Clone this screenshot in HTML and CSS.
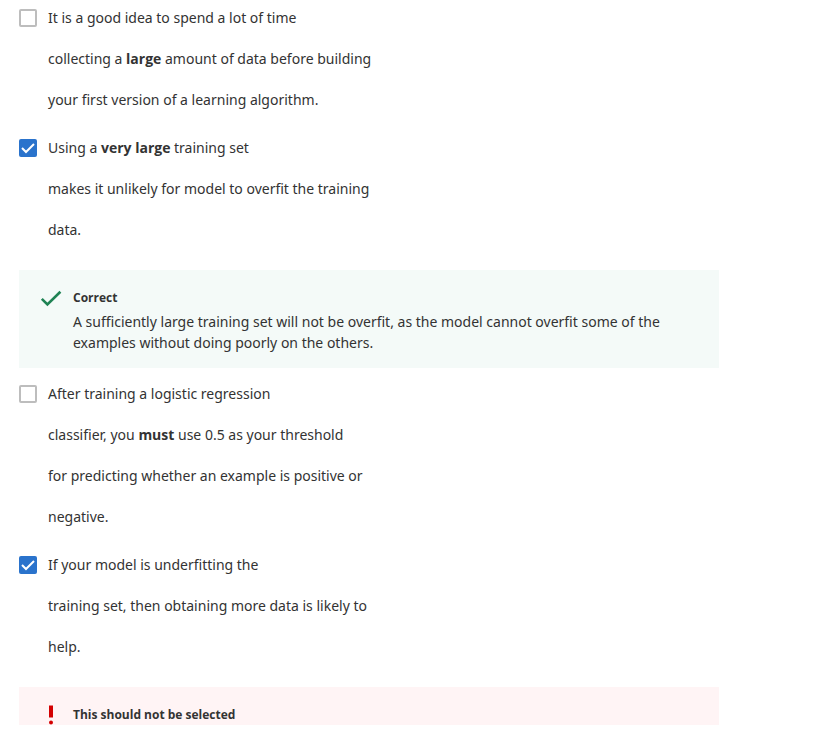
FILE: index.html
```html
<!DOCTYPE html>
<html lang="en">
<head>
<meta charset="utf-8">
<meta name="viewport" content="width=device-width, initial-scale=1">
<title>Quiz</title>
<link rel="stylesheet" href="styles.css">
</head>
<body>
<main class="quiz">
  <div class="option">
    <input type="checkbox" id="a">
    <label for="a"><span>It is a good idea to spend a lot of time</span><span>collecting a <b>large</b> amount of data before building</span><span>your first version of a learning algorithm.</span></label>
  </div>
  <div class="option">
    <input type="checkbox" id="b" checked>
    <label for="b"><span>Using a <b>very large</b> training set</span><span>makes it unlikely for model to overfit the training</span><span>data.</span></label>
  </div>
  <section class="feedback correct">
    <svg class="icon" viewBox="0 0 24 24" aria-hidden="true"><path d="M2.8 11.8 8.4 17.4 21.4 4.8" fill="none" stroke="#1f8354" stroke-width="2.6"/></svg>
    <div>
      <h2>Correct</h2>
      <p>A sufficiently large training set will not be overfit, as the model cannot overfit some of the examples without doing poorly on the others.</p>
    </div>
  </section>
  <div class="option">
    <input type="checkbox" id="c">
    <label for="c"><span>After training a logistic regression</span><span>classifier, you <b>must</b> use 0.5 as your threshold</span><span>for predicting whether an example is positive or</span><span>negative.</span></label>
  </div>
  <div class="option">
    <input type="checkbox" id="d" checked>
    <label for="d"><span>If your model is underfitting the</span><span>training set, then obtaining more data is likely to</span><span>help.</span></label>
  </div>
  <section class="feedback wrong">
    <svg class="icon" viewBox="0 0 24 24" aria-hidden="true"><path d="M10 1.5h4v12h-4z" fill="#d30001"/><circle cx="12" cy="18.5" r="2" fill="#d30001"/></svg>
    <div>
      <h2>This should not be selected</h2>
    </div>
  </section>
</main>
</body>
</html>
```
FILE: styles.css
```css
* { box-sizing: border-box; }
body {
  margin: 0;
  background: #fff;
  color: #333;
  font: 14px/21px "Noto Sans", sans-serif;
}
.quiz {
  max-width: 719px;
  padding: 7px 0 0 19px;
}
.option {
  display: flex;
  gap: 11px;
  margin-bottom: 27px;
}
.option label {
  display: grid;
  gap: 20px;
}
.option input {
  appearance: none;
  flex: none;
  width: 18px;
  height: 18px;
  margin: 2px 0 0;
  border: 2px solid #bdbdbd;
  border-radius: 2px;
  background: #fff;
}
.option input:checked {
  border: 0;
  background: #2a73cc url("data:image/svg+xml,%3Csvg xmlns='http://www.w3.org/2000/svg' viewBox='0 0 18 18'%3E%3Cpath d='M3 9l4 4 8-8' fill='none' stroke='white' stroke-width='2'/%3E%3C/svg%3E");
}
b, h2 { font-family: "Open Sans", sans-serif; }
.feedback {
  display: flex;
  gap: 10px;
  margin: 30px 0 15px;
  padding: 17px 24px 15px 20px;
}
.correct { background: #f4faf8; }
.wrong {
  height: 38px;
  margin-bottom: 0;
  overflow: hidden;
  background: #fff4f5;
}
.icon {
  flex: none;
  width: 24px;
  height: 24px;
}
h2 {
  margin: 0 0 3px;
  font-size: 12px;
  line-height: 21px;
}
p { margin: 0; }
```
